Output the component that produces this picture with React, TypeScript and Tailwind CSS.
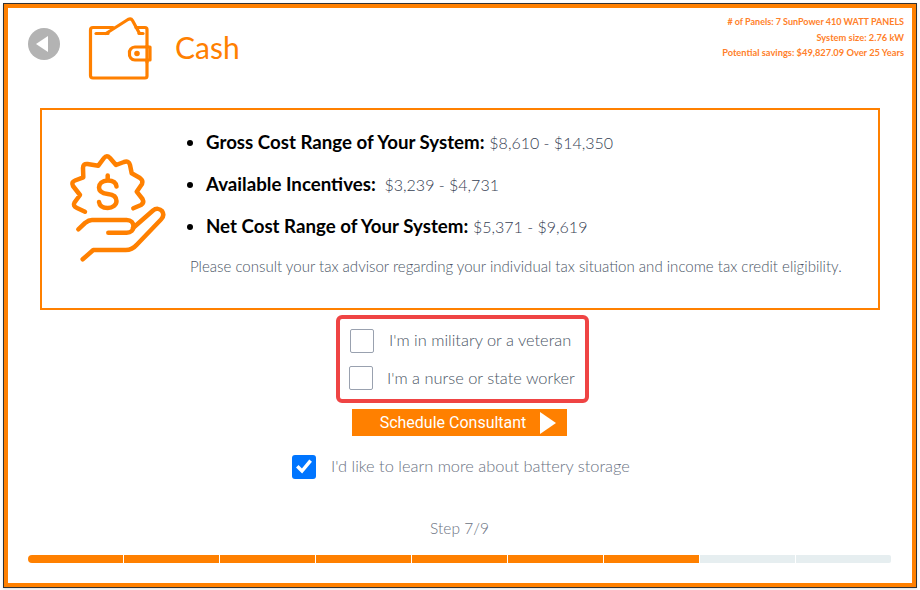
import React from 'react';

const WalletIcon = () => (
  <svg width="64" height="64" viewBox="88 16 64 64" fill="none" stroke="#ff8000" strokeWidth="3.200" strokeLinecap="round" strokeLinejoin="round" className="shrink-0">
    <path d="M147 46V76a2 2 0 0 1-2 2H93a2.500 2.500 0 0 1-2.500-2.500V30a2.500 2.500 0 0 1 2.500-2.500h20" />
    <path d="M136 27.500h9a2 2 0 0 1 2 2V46" />
    <path d="M96 33.500H108" />
    <path d="M139 33.500H143" />
    <path d="M106 33.500L128 19.500C130 18.500 131.500 18.800 132.500 20.500L139 32.500" />
    <path d="M150 47H135a5.500 5.500 0 0 0-5.500 6.500 5.500 5.500 0 0 0 5.500 6.500H150Z" />
    <path d="M147 60V62" />
    <circle cx="137" cy="53.500" r="1.200" fill="#ff8000" />
  </svg>
);

const MoneyHandIcon = () => (
  <svg width="96" height="108" viewBox="70 155 96 108" fill="none" stroke="#ff8000" strokeWidth="4.500" strokeLinecap="round" strokeLinejoin="round" className="shrink-0 overflow-visible">
    <path d="M85 211.700L77 208Q72.500 206 74.500 202.500L80 195L73 186Q71 182 75 180.500L83.300 177.300L83 168Q83 163.500 87.500 164L98.300 165.700L104 158Q106.700 154.500 110 158L116 165L124 162Q129 160.500 130 165L131.700 173.300L140 178Q143.500 180.500 142 184L136.700 191.700L142.500 199Q144.500 203 141 205L133.300 208.300" />
    <path d="M116.500 186.500C116 182 112 180.500 107.700 180.500C102 180.500 99 184 99 187.500C99 192 103 193.500 107.700 194C112.500 194.500 116.500 196.500 116.500 201C116.500 205 112.500 208 107.700 208C102.500 208 99.500 205.500 99 202" />
    <path d="M107.700 175.500V180" />
    <path d="M78.300 229.300L85 223C87.500 221 89 220 92 220H126.700C131 220 133.500 223 133.500 226.500C133.500 230 131 232.700 126.700 232.700H108.300" />
    <path d="M133 228L153 210.500C156 208 160 208.500 162 211C164 214 163.500 217 161 219.500L137 244.500C133.500 248.500 130 250 125.700 250H93.300L82.700 259.300" />
  </svg>
);

const Checkbox = () => (
  <span className="block w-6 h-6 shrink-0 bg-white border border-gray-400 rounded-[2px]" />
);

const steps = [1, 2, 3, 4, 5, 6, 7, 8, 9];

const App = () => {
  return (
    <div className="w-[920px] h-[590px] bg-white p-[3px] font-['Lato',sans-serif]">
      <div className="w-[914px] h-[585px] border border-[#333333] shadow-sm">
        <div className="h-full border-4 border-[#ff8000] flex flex-col">
          {/* Header */}
          <div className="h-[100px] shrink-0 flex items-start pl-5 pr-2">
            <div className="mt-5 w-8 h-8 rounded-full bg-[#b3b3b3] flex items-center justify-center">
              <span className="block mr-1 border-y-[8px] border-y-transparent border-r-[12px] border-r-white" />
            </div>
            <div className="mt-2 ml-[28px]">
              <WalletIcon />
            </div>
            <h1 className="ml-[23px] mt-[19px] text-[30px] leading-10 text-[#ff8000] font-normal">Cash</h1>
            <div className="ml-auto mt-[6px] text-right text-[9.300px] leading-[15.500px] font-bold text-[#ff7f2a]">
              <p className="text-[9px]"># of Panels: 7 SunPower 410 WATT PANELS</p>
              <p>System size: 2.76 kW</p>
              <p>Potential savings: $49,827.09 Over 25 Years</p>
            </div>
          </div>

          {/* Cost summary */}
          <div className="mx-8 h-[202px] shrink-0 border-2 border-[#ff8000] flex items-start pl-7 pt-[45px]">
            <MoneyHandIcon />
            <div className="-mt-[34px] ml-6 text-black">
              <ul className="list-disc pl-4 text-[18.700px]">
                <li className="h-[42px] leading-[42px]">
                  <b>Gross Cost Range of Your System:</b> <span className="text-[16px] font-light text-gray-700">$8,610 - $14,350</span>
                </li>
                <li className="h-[42px] leading-[42px]">
                  <b>Available Incentives:</b> <span className="ml-1 text-[16px] font-light text-gray-700">$3,239 - $4,731</span>
                </li>
                <li className="h-[42px] leading-[42px]">
                  <b>Net Cost Range of Your System:</b> <span className="text-[16px] font-light text-gray-700">$5,371 - $9,619</span>
                </li>
              </ul>
              <p className="mt-[9px] text-[15.050px] leading-5 font-light text-gray-600 whitespace-nowrap">
                Please consult your tax advisor regarding your individual tax situation and income tax credit eligibility.
              </p>
            </div>
          </div>

          {/* Discount options */}
          <div className="mt-[5px] ml-[328px] w-[253px] h-[88px] shrink-0 border-4 border-[#ef4444] rounded-md text-[16.400px] font-light text-gray-600">
            <div className="flex items-start mt-[10px] ml-[10px] h-6">
              <Checkbox />
              <span className="ml-[15px] leading-[22px] whitespace-nowrap">I'm in military or a veteran</span>
            </div>
            <div className="flex items-start mt-[13px] ml-[9px] h-6">
              <Checkbox />
              <span className="ml-[14px] leading-6 whitespace-nowrap">I'm a nurse or state worker</span>
            </div>
          </div>

          <button className="mt-[6px] ml-[344px] w-[215px] h-[27px] shrink-0 bg-[#ff8000] text-white flex items-center justify-center font-['Roboto',sans-serif] text-base">
            <span className="ml-[17px]">Schedule Consultant</span>
            <span className="block ml-[14px] border-y-[11px] border-y-transparent border-l-[16px] border-l-white" />
          </button>

          <div className="mt-[19px] ml-[284px] flex items-start h-6">
            <span className="w-6 h-6 rounded-[3px] bg-[#0075ff] flex items-center justify-center">
              <svg width="18" height="18" viewBox="0 0 18 18" fill="none" stroke="white" strokeWidth="3.500" strokeLinecap="square">
                <path d="M3.500 9.500L7 13L14.500 4" />
              </svg>
            </span>
            <span className="ml-[15px] text-[16.400px] font-light leading-[22px] text-gray-500 whitespace-nowrap">I'd like to learn more about battery storage</span>
          </div>

          {/* Progress */}
          <p className="mt-[37px] text-center -ml-[1px] text-[15.500px] font-light leading-6 text-gray-500">Step 7/9</p>
          <div className="mt-[15px] ml-5 flex gap-px">
            {steps.map((s) => (
              <div
                key={s}
                className={`w-[95px] h-2 ${s <= 7 ? 'bg-[#ff8000]' : 'bg-[#e6eef0]'} ${s === 1 ? 'rounded-l-full' : ''} ${s === 9 ? 'rounded-r-[2px]' : ''}`}
              />
            ))}
          </div>
        </div>
      </div>
    </div>
  );
};

export default App;
